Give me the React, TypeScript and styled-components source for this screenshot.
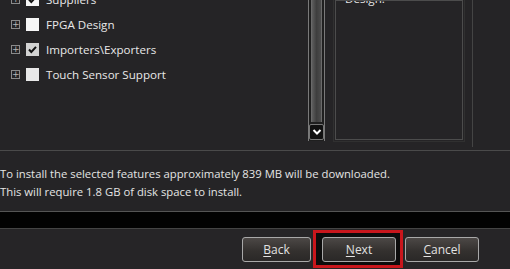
import styled, { createGlobalStyle } from "styled-components";

const GlobalStyle = createGlobalStyle`
  html, body {
    margin: 0;
    padding: 0;
    background: #252426;
  }
  body {
    font-family: "Open Sans", "Noto Sans", sans-serif;
    color: #e6e6e6;
  }
`;

type Feature = {
  name: string;
  checked?: boolean;
  tone?: string;
};

const features: Feature[] = [
  { name: "Suppliers", checked: true },
  { name: "FPGA Design" },
  { name: "Importers\\Exporters", checked: true, tone: "#d2d2d2" },
  { name: "Touch Sensor Support", tone: "#e8e8e8" },
];

const Check = ({ on }: { on?: boolean }) =>
  on ? (
    <svg width="13" height="13" viewBox="0 0 13 13">
      <path d="M3 6.5 L5.3 9 L10 3.8" fill="none" stroke="#111" strokeWidth="2" />
    </svg>
  ) : null;

const ChevronDown = () => (
  <svg width="10" height="8" viewBox="0 0 10 8">
    <path d="M1.5 2 L5 5.5 L8.5 2" fill="none" stroke="#fff" strokeWidth="2" />
  </svg>
);

const App = () => {
  return (
    <>
      <GlobalStyle />
      <Window>
        <TopArea>
          <Tree>
            <TreeList>
              {features.map((f) => (
                <TreeRow key={f.name}>
                  <Expander>+</Expander>
                  <CheckBox $bg={f.tone}>
                    <Check on={f.checked} />
                  </CheckBox>
                  <Label>{f.name}</Label>
                </TreeRow>
              ))}
            </TreeList>
          </Tree>
          <ScrollBar>
            <Thumb />
            <ArrowButton>
              <ChevronDown />
            </ArrowButton>
          </ScrollBar>
          <DescriptionPanel>
            <DescriptionText>Design.</DescriptionText>
          </DescriptionPanel>
          <RightEdge />
        </TopArea>
        <Info>
          <p>To install the selected features approximately 839 MB will be downloaded.</p>
          <p>This will require 1.8 GB of disk space to install.</p>
        </Info>
        <Band />
        <Footer>
          <Button>
            <u>B</u>ack
          </Button>
          <Highlight>
            <Button $wide>
              <u>N</u>ext
            </Button>
          </Highlight>
          <Button $wide>
            <u>C</u>ancel
          </Button>
        </Footer>
      </Window>
    </>
  );
};

const Window = styled.div`
  width: 510px;
  height: 269px;
  overflow: hidden;
  display: flex;
  flex-direction: column;
  background: #252426;
`;

const TopArea = styled.div`
  height: 150px;
  flex-shrink: 0;
  display: flex;
  border-bottom: 1px solid #4a4a4a;
  overflow: hidden;
`;

const Tree = styled.div`
  width: 308px;
  overflow: hidden;
`;

const TreeList = styled.div`
  margin-top: -13px;
  display: flex;
  flex-direction: column;
`;

const TreeRow = styled.div`
  height: 25px;
  display: flex;
  align-items: center;
  padding-left: 11px;
`;

const Expander = styled.div`
  width: 7px;
  height: 7px;
  border: 1px solid #8a8a8a;
  color: #b5b5b5;
  font-size: 9px;
  line-height: 7px;
  text-align: center;
  font-family: "DejaVu Sans", sans-serif;
  margin-right: 6px;
`;

const CheckBox = styled.div<{ $bg?: string }>`
  width: 13px;
  height: 13px;
  background: ${(p) => p.$bg ?? "#f6f6f6"};
  display: flex;
  align-items: center;
  justify-content: center;
  margin-right: 7px;
`;

const Label = styled.span`
  font-size: 11.6px;
  color: #e8e8e8;
  white-space: nowrap;
`;

const ScrollBar = styled.div`
  width: 15px;
  height: 141px;
  border-left: 1px solid #7a7a7a;
  border-right: 1px solid #7a7a7a;
  display: flex;
  flex-direction: column;
  align-items: center;
  background: #1f1f1f;
`;

const Thumb = styled.div`
  width: 11px;
  height: 122px;
  background: linear-gradient(90deg, #5e5e5e 0%, #3e3e3e 50%, #4c4c4c 100%);
  border-left: 1px solid #6a6a6a;
  border-right: 1px solid #6a6a6a;
  box-sizing: border-box;
`;

const ArrowButton = styled.div`
  margin-top: 2px;
  width: 15px;
  height: 16px;
  box-sizing: border-box;
  border: 1px solid #777;
  border-radius: 2px;
  background: #111;
  display: flex;
  align-items: center;
  justify-content: center;
`;

const DescriptionPanel = styled.div`
  margin-left: 10px;
  width: 126px;
  height: 138px;
  border: 1px solid #4c4c4c;
  outline: 1px solid #303030;
  outline-offset: 1px;
  overflow: hidden;
`;

const DescriptionText = styled.div`
  margin-top: -10px;
  padding-left: 9px;
  font-size: 11.6px;
  color: #e8e8e8;
`;

const RightEdge = styled.div`
  margin-left: 9px;
  width: 1px;
  height: 147px;
  background: #444;
`;

const Info = styled.div`
  height: 60px;
  flex-shrink: 0;
  padding-top: 14px;
  box-sizing: border-box;
  font-size: 11.3px;
  color: #e4e4e4;
  p {
    margin: 0;
    line-height: 17.5px;
    white-space: nowrap;
  }
`;

const Band = styled.div`
  height: 16px;
  flex-shrink: 0;
  background: #020202;
  border-top: 1px solid #555;
  border-bottom: 1px solid #444;
`;

const Footer = styled.div`
  flex: 1;
  display: flex;
  align-items: flex-start;
  padding-top: 8px;
  padding-left: 242px;
  background: #262527;
`;

const Highlight = styled.div`
  margin: -7px 2px 0 2px;
  padding: 4px 4px 3px 6px;
  border: 3px solid #c8161c;
  background: #0c0c0c;
`;

const Button = styled.div<{ $wide?: boolean }>`
  width: ${(p) => (p.$wide ? "74px" : "69px")};
  height: 25px;
  box-sizing: border-box;
  border: 1px solid #a9a9a9;
  border-radius: 3px;
  background: linear-gradient(180deg, #4c4846 0%, #34312f 55%, #2a2827 100%);
  color: #e2e2e2;
  font-size: 12px;
  display: flex;
  align-items: center;
  justify-content: center;
  u {
    text-decoration-thickness: 1px;
    text-underline-offset: 2px;
  }
`;

export default App;
